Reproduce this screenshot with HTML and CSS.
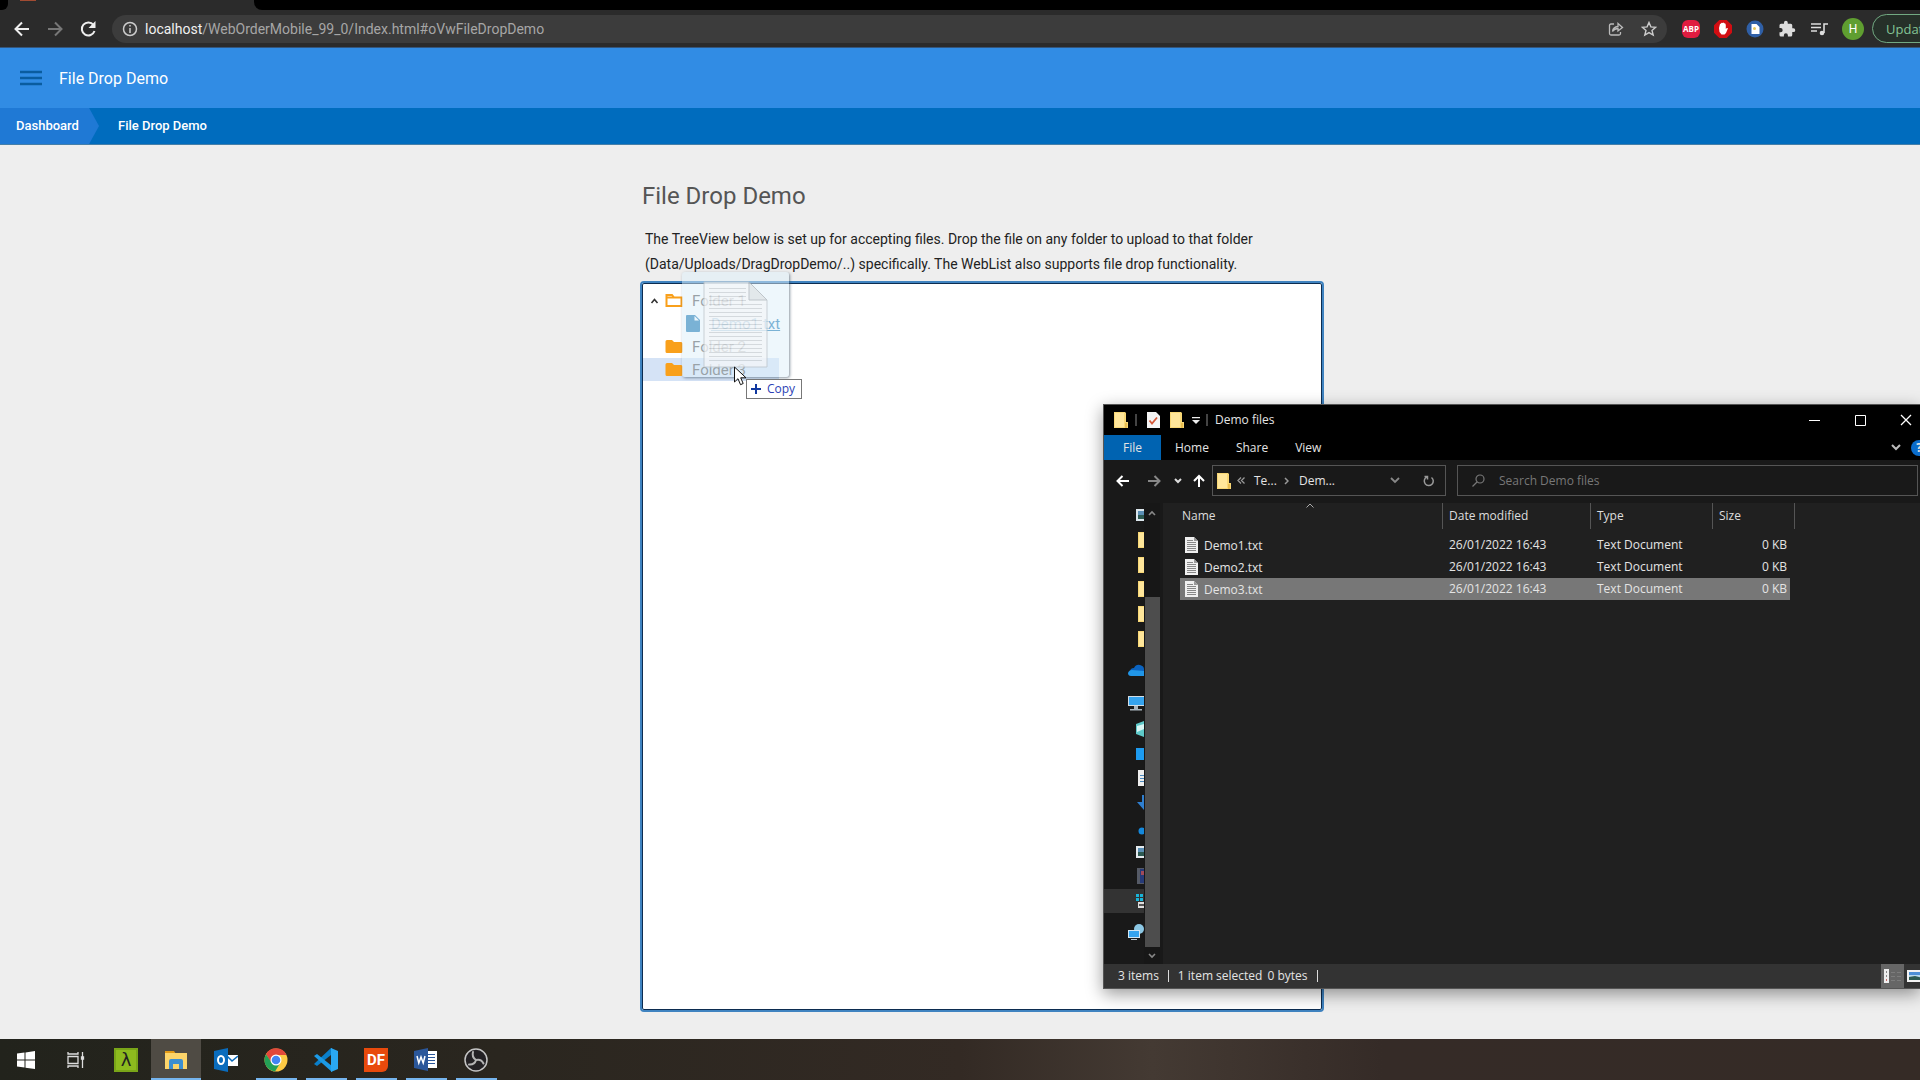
FILE: index.html
```html
<!DOCTYPE html>
<html lang="en">
<head>
<meta charset="utf-8">
<title>File Drop Demo</title>
<link rel="stylesheet" href="styles.css">
</head>
<body>
<svg class="defs" aria-hidden="true">
  <symbol id="folder" viewBox="0 0 14 18"><path fill="#f8d775" d="M0 1h11l1 1v9h2v6H0z"/><path fill="#e9bd4f" d="M11 12h2v5h-2z"/><path fill="#ffe69a" d="M1 2h9v14H1z"/></symbol>
  <symbol id="textfile" viewBox="0 0 13 16"><path fill="#f0f0f0" d="M0 0h9l4 4v12H0z"/><path fill="#9a9a9a" d="M9 0l4 4H9z"/><path stroke="#888" d="M2 3.500h6M2 5.500h9M2 7.500h9M2 9.500h9M2 11.500h9M2 13.500h9"/></symbol>
  <symbol id="treefolder" viewBox="0 0 18 15"><path fill="#f9a01b" d="M2 1h5l2 2h7q1.500 0 1.500 1.500v8q0 1.500-1.500 1.500H2Q.5 14 .5 12.500v-10Q.5 1 2 1z"/></symbol>
</svg>

<header class="browser">
  <div class="tabs"><div class="tab"><span class="favicon"></span></div><div class="tabs-rest"></div></div>
  <div class="toolbar">
    <button class="tool" aria-label="Back"><svg width="18" height="18" viewBox="0 0 18 18" fill="none" stroke="#eee" stroke-width="2"><path d="M16 9H3M9 2.500L2.500 9 9 15.500"/></svg></button>
    <button class="tool" aria-label="Forward"><svg width="18" height="18" viewBox="0 0 18 18" fill="none" stroke="#777" stroke-width="2"><path d="M2 9h13M9 2.500L15.500 9 9 15.500"/></svg></button>
    <button class="tool" aria-label="Reload"><svg width="18" height="18" viewBox="0 0 18 18" fill="none" stroke="#eee" stroke-width="2"><path d="M14.500 5A6.500 6.500 0 1 0 15.500 11"/><path fill="#eee" stroke="none" d="M16.500 1v7H9.500z"/></svg></button>
    <div class="address">
      <svg width="16" height="16" viewBox="0 0 16 16" fill="none" stroke="#ccc" stroke-width="1.500"><circle cx="8" cy="8" r="6.500"/><path d="M8 7v5M8 4v1.600"/></svg>
      <span class="url"><b>localhost</b>/WebOrderMobile_99_0/Index.html#oVwFileDropDemo</span>
      <button class="tool" aria-label="Share"><svg width="16" height="16" viewBox="0 0 16 16" fill="none" stroke="#bbb" stroke-width="1.300"><path d="M6 3H3Q1.500 3 1.500 4.500v8Q1.500 14 3 14h8q1.500 0 1.500-1.500V11M4.500 10.500Q5 6 10 5.500V2.500L14.500 6.500 10 10V7.500Q6.500 7.500 4.500 10.500z"/></svg></button>
      <button class="tool" aria-label="Bookmark"><svg width="16" height="16" viewBox="0 0 16 16" fill="none" stroke="#ccc" stroke-width="1.400"><path d="M8 1.500l1.900 4.400 4.800.4-3.700 3.100 1.200 4.700L8 11.600l-4.200 2.500L5 9.400 1.300 6.300l4.800-.4z"/></svg></button>
    </div>
    <div class="extensions">
      <button class="tool" aria-label="Adblock Plus"><span class="abp">ABP</span></button>
      <button class="tool" aria-label="AdBlock"><svg width="18" height="18" viewBox="0 0 18 18"><path fill="#d20d12" d="M5.300 0h7.400L18 5.300v7.400L12.700 18H5.300L0 12.700V5.300z"/><path fill="#fff" d="M5 8l1-4 1-.5.5-.8 1 .3.8-.5 1 .8 1 .2.5 1.500V9l1-1 1.200.3-2 4.700-1.500 1.500H7.500L5.500 12z"/></svg></button>
      <button class="tool" aria-label="Document"><svg width="18" height="18" viewBox="0 0 18 18"><circle cx="9" cy="9" r="8.500" fill="#2f5fa6"/><path fill="#fff" d="M5.500 4h5l3 3v7h-8z"/><circle cx="8.500" cy="8.500" r="1.500" fill="#e8c85a"/></svg></button>
      <button class="tool" aria-label="Extensions"><svg width="18" height="18" viewBox="0 0 24 24" fill="#ddd"><path d="M20.500 11H19V7a2 2 0 0 0-2-2h-4V3.500a2.500 2.500 0 0 0-5 0V5H4a2 2 0 0 0-2 2v3.800h1.500a2.700 2.700 0 0 1 0 5.400H2V20a2 2 0 0 0 2 2h3.800v-1.500a2.700 2.700 0 0 1 5.400 0V22H17a2 2 0 0 0 2-2v-4h1.500a2.500 2.500 0 0 0 0-5z"/></svg></button>
      <button class="tool" aria-label="Media"><svg width="18" height="18" viewBox="0 0 18 18" fill="none" stroke="#ddd" stroke-width="1.600"><path d="M1 4h10M1 7.500h10M1 11h6M14 13V4h4"/><circle cx="12" cy="13" r="2.300" fill="#ddd" stroke="none"/></svg></button>
      <button class="avatar" aria-label="Profile">H</button>
      <button class="update">Update</button>
    </div>
  </div>
</header>

<main class="page">
  <div class="app-bar">
    <button class="tool" aria-label="Menu"><svg width="22" height="18" viewBox="0 0 22 18" stroke="#0a5c9f" stroke-width="2.600"><path d="M0 3h22M0 9h22M0 15h22"/></svg></button>
    <span>File Drop Demo</span>
  </div>
  <nav class="crumbs"><a class="crumb-home" href="#dashboard">Dashboard</a><a class="crumb" href="#demo">File Drop Demo</a></nav>
  <section class="content">
    <h1>File Drop Demo</h1>
    <p>The TreeView below is set up for accepting files. Drop the file on any folder to upload to that folder (Data/Uploads/DragDropDemo/..) specifically. The WebList also supports file drop functionality.</p>
    <ul class="tree">
      <li><svg class="caret" viewBox="0 0 8 6" fill="none" stroke="#333" stroke-width="1.600"><path d="M1 5l3-3.500L7 5"/></svg><svg class="ico" viewBox="0 0 18 15" fill="none" stroke="#f9a01b" stroke-width="2"><path d="M1.500 4.500h15V13h-15V2H7l2 2.500"/></svg>Folder 1</li>
      <li class="child"><svg class="doc" viewBox="0 0 14 17"><path fill="#1674b1" d="M1 0h8l5 5v11q0 1-1 1H1q-1 0-1-1V1q0-1 1-1z"/><path fill="#fff" d="M8.500 1v4.500H13z"/></svg><a href="#demo1">Demo1.txt</a></li>
      <li><span class="caret"></span><svg class="ico"><use href="#treefolder"/></svg>Folder 2</li>
      <li class="target"><span class="caret"></span><svg class="ico"><use href="#treefolder"/></svg>Folder 3</li>
    </ul>
  </section>
  <div class="drag">
    <div class="ghost"><svg width="66" height="88" viewBox="0 0 66 88"><path fill="#f4f6f8" stroke="#bcc3c8" d="M1 1h45l18 18v67H1z"/><path fill="#dfe3e6" stroke="#aeb5ba" d="M46 1v18h18z"/><path stroke="#ccd0d3" d="M6 7.500h37M6 11.500h37M6 15.500h37M6 19.500h37M6 23.500h53M6 27.500h53M6 31.500h53M6 35.500h53M6 39.500h53M6 43.500h53M6 47.500h53M6 51.500h53M6 55.500h53M6 59.500h53M6 63.500h53M6 67.500h53M6 71.500h53M6 75.500h53M6 79.500h53"/></svg></div>
    <svg class="cursor" viewBox="0 0 13 20"><path fill="#fff" stroke="#111" d="M.5 1v15l3.500-3.300 2.500 6 2.700-1.200-2.500-5.700H12z"/></svg>
    <div class="tip"><svg width="10" height="10" viewBox="0 0 10 10" stroke="#1038a0" stroke-width="2"><path d="M0 5h10M5 0v10"/></svg>Copy</div>
  </div>
</main>

<section class="window">
  <div class="titlebar">
    <svg width="14" height="18"><use href="#folder"/></svg><i class="sep"></i>
    <svg class="check" width="13" height="16" viewBox="0 0 13 16"><path fill="#f4f4f4" d="M0 0h9l4 4v12H0z"/><path fill="none" stroke="#d4593a" stroke-width="1.800" d="M2.500 8.500L5 11.500l5-6"/></svg>
    <svg width="14" height="18"><use href="#folder"/></svg>
    <svg class="drop" width="8" height="7" viewBox="0 0 8 7" fill="#eee"><path d="M0 0h8v1.300H0zM0 3h8L4 7z"/></svg><i class="sep"></i>
    <span class="wtitle">Demo files</span>
    <button class="tool" aria-label="Minimize"><svg width="12" height="12" stroke="#fff"><path d="M1 6.500h11"/></svg></button>
    <button class="tool" aria-label="Maximize"><svg width="12" height="12" fill="none" stroke="#fff"><path d="M1.500 1.500h10v10h-10z"/></svg></button>
    <button class="tool" aria-label="Close"><svg width="12" height="12" fill="none" stroke="#fff" stroke-width="1.300"><path d="M1 1l10 10M11 1L1 11"/></svg></button>
  </div>
  <div class="ribbon">
    <button class="file">File</button><button>Home</button><button>Share</button><button>View</button>
    <svg class="expand" width="10" height="7" viewBox="0 0 10 7" fill="none" stroke="#bbb" stroke-width="2"><path d="M1 1l4 4 4-4"/></svg><span class="help">?</span>
  </div>
  <div class="location">
    <button class="tool" aria-label="Back"><svg width="14" height="12" viewBox="0 0 14 12" fill="none" stroke="#fff" stroke-width="2"><path d="M13 6H2M6.500 1L1.500 6l5 5"/></svg></button>
    <button class="tool" aria-label="Forward"><svg width="14" height="12" viewBox="0 0 14 12" fill="none" stroke="#888" stroke-width="2"><path d="M1 6h11M7.500 1l5 5-5 5"/></svg></button>
    <button class="tool recent" aria-label="Recent"><svg width="8" height="6" viewBox="0 0 8 6" fill="none" stroke="#ddd" stroke-width="2"><path d="M1 1l3 3 3-3"/></svg></button>
    <button class="tool" aria-label="Up"><svg width="12" height="14" viewBox="0 0 12 14" fill="none" stroke="#fff" stroke-width="2"><path d="M6 13V2M1 7l5-5 5 5"/></svg></button>
    <div class="path">
      <svg width="14" height="18"><use href="#folder"/></svg>
      <svg class="p1" width="8" height="7" viewBox="0 0 8 7" fill="none" stroke="#999" stroke-width="1.300"><path d="M4 .5l-3 3 3 3M7.500 .5l-3 3 3 3"/></svg><span class="p2">Te...</span>
      <svg class="p3" width="5" height="8" viewBox="0 0 5 8" fill="none" stroke="#999" stroke-width="1.500"><path d="M1 1l3 3-3 3"/></svg><span class="p4">Dem...</span>
      <svg class="p5" width="10" height="7" viewBox="0 0 10 7" fill="none" stroke="#888" stroke-width="1.800"><path d="M1 1l4 4 4-4"/></svg>
      <svg width="12" height="12" viewBox="0 0 12 12" fill="none" stroke="#999" stroke-width="1.500"><path d="M8.500 2.500A4.500 4.500 0 1 1 3.500 2.200M1.500 1.500h3v3"/></svg>
    </div>
    <label class="search"><svg width="13" height="13" viewBox="0 0 13 13" fill="none" stroke="#777" stroke-width="1.200"><circle cx="8" cy="5" r="4"/><path d="M5 8l-4.500 4.500"/></svg><input type="search" placeholder="Search Demo files" aria-label="Search Demo files"></label>
  </div>
  <div class="body">
    <div class="nav">
      <div class="group quick">
        <span><svg viewBox="0 0 16 16"><path fill="#dce6ec" d="M0 2h16v12H0z"/><path fill="#5b8fb5" d="M2 4h12v4H2z"/><path fill="#2d5a52" d="M2 8h12v4H2z"/></svg></span>
        <span class="fold"><svg><use href="#folder"/></svg></span><span class="fold"><svg><use href="#folder"/></svg></span><span class="fold"><svg><use href="#folder"/></svg></span><span class="fold"><svg><use href="#folder"/></svg></span><span class="fold"><svg><use href="#folder"/></svg></span>
      </div>
      <div class="group single"><span class="root"><svg viewBox="0 0 16 16"><path fill="#0a63c0" d="M2 10q0-4 4-4 2-4 6-3t4 4v6H3z"/><path fill="#2196e8" d="M0 11q1-3 4-3l12 1v5H3q-3 0-3-3z"/></svg></span></div>
      <div class="group single"><span class="root"><svg viewBox="0 0 16 16"><path fill="#d2dde5" d="M0 1h16v10H0z"/><path fill="#35a3ee" d="M1 2h15v8H1z"/><path fill="#aab5bd" d="M6 11h4v3h4v1.500H2V14h4z"/></svg></span></div>
      <div class="group pc">
        <span><svg viewBox="0 0 16 16"><path fill="#5ec9c9" d="M0 3l8-3v16l-8-3z"/><path fill="#d9f6f4" d="M1 5l7-2v5L1 11z"/></svg></span>
        <span><svg viewBox="0 0 16 16"><path fill="#1d9bf0" d="M0 2h16v12H0z"/></svg></span>
        <span><svg viewBox="0 0 16 16"><path fill="#eee" d="M2 0h12v16H2z"/><path stroke="#4c8ac0" d="M4 5.500h8M4 8.500h8M4 11.500h8"/></svg></span>
        <span><svg viewBox="0 0 16 16"><path fill="#2f7fd0" d="M6 0h4v7h5l-7 8-7-8h5z"/></svg></span>
        <span><svg viewBox="0 0 16 16"><circle cx="6" cy="12" r="3.500" fill="#1488dc"/></svg></span>
        <span><svg viewBox="0 0 16 16"><path fill="#e4eaee" d="M0 2h16v12H0z"/><path fill="#5b8fb5" d="M2 4h12v4H2z"/><path fill="#2d5a52" d="M2 8h12v4H2z"/></svg></span>
        <span><svg viewBox="0 0 16 16"><path fill="#555a66" d="M1 0h14v16H1z"/><path fill="#263a78" d="M4 1h8v14H4z"/><path fill="#a04a5a" d="M5 3h4v4H5z"/></svg></span>
        <span class="active"><svg viewBox="0 0 16 16"><path fill="#19b4d8" d="M0 1h3v3H0zM4 1h3v3H4zM0 5h3v3H0zM4 5h3v3H4z"/><path fill="#ddd" d="M2 9h14v6H2z"/><path fill="#555" d="M3 11h9v2H3z"/></svg></span>
      </div>
      <div class="group net"><span class="root"><svg viewBox="0 0 16 16"><circle cx="11" cy="5" r="5" fill="#8cc7e4"/><path fill="#d2e6f3" d="M0 6h12v8H0z"/><path fill="#35a3ee" d="M1 7h10v6H1z"/><path fill="#bcc6cc" d="M3 15h6v1H3z"/></svg></span></div>
    </div>
    <div class="scroll"><svg width="8" height="6" viewBox="0 0 8 6" fill="none" stroke="#888" stroke-width="1.600"><path d="M1 5l3-3 3 3"/></svg><i></i><svg width="8" height="6" viewBox="0 0 8 6" fill="none" stroke="#888" stroke-width="1.600"><path d="M1 1l3 3 3-3"/></svg></div>
    <div class="files">
      <table>
        <thead><tr><th class="c-name">Name<svg class="sort" viewBox="0 0 8 5" fill="none" stroke="#aaa"><path d="M.5 4.500L4 1l3.500 3.500"/></svg></th><th class="c-date">Date modified</th><th class="c-type">Type</th><th class="c-size">Size</th></tr></thead>
        <tbody>
          <tr><td><svg><use href="#textfile"/></svg>Demo1.txt</td><td>26/01/2022 16:43</td><td>Text Document</td><td>0 KB</td></tr>
          <tr><td><svg><use href="#textfile"/></svg>Demo2.txt</td><td>26/01/2022 16:43</td><td>Text Document</td><td>0 KB</td></tr>
          <tr class="selected"><td><svg><use href="#textfile"/></svg>Demo3.txt</td><td>26/01/2022 16:43</td><td>Text Document</td><td>0 KB</td></tr>
        </tbody>
      </table>
    </div>
  </div>
  <div class="status"><span>3 items</span><i></i><span>1 item selected</span><span class="bytes">0 bytes</span><i></i>
    <button class="view on" aria-label="Details view"><svg width="18" height="14" viewBox="0 0 18 14"><path fill="#eee" d="M0 0h5v14H0z"/><path stroke="#7c7c7c" d="M7 3.500h4M13 3.500h4M7 7.500h4M13 7.500h4M7 11.500h4M13 11.500h4"/><path fill="#c66" d="M2 10h1v2H2z"/><path fill="#888" d="M2 2h1v2H2zM2 6h1v2H2z"/></svg></button>
    <button class="view" aria-label="Thumbnail view"><svg width="16" height="12" viewBox="0 0 16 12"><path fill="#f2f2f2" d="M0 0h16v12H0z"/><path fill="#4d8fd6" d="M2 2h14v4H2z"/><path fill="#b9d9ee" d="M2 5h14v2H2z"/><path fill="#2d5a52" d="M2 7l6-1 8 2v2H2z"/></svg></button>
  </div>
</section>

<footer class="taskbar">
  <button aria-label="Start"><svg width="18" height="18" viewBox="0 0 18 18" fill="#fff"><path d="M0 2.500l7.500-1V8.500H0zM8.500 1.400L18 0v8.500H8.500zM0 9.500h7.500v7L0 15.500zM8.500 9.500H18V18l-9.500-1.300z"/></svg></button>
  <button aria-label="Task view"><svg width="18" height="18" viewBox="0 0 18 18" fill="none" stroke="#ddd" stroke-width="1.300"><path d="M1 1v2h10V1M1 17v-2h10v2M1 5.500h10v7H1zM15.500 1v16"/><path fill="#ddd" d="M14.500 6h2v2h-2z"/></svg></button>
  <button aria-label="Lambda"><span class="lambda">λ</span></button>
  <button class="open current" aria-label="File Explorer"><svg width="24" height="20" viewBox="0 0 24 20"><path fill="#e39a16" d="M1 1h9l2 3H1z"/><path fill="#fcd46a" d="M1 3h22v16H1z"/><path fill="#3c8ed0" d="M5 11q0-2 2-2h10q2 0 2 2v8h-4v-5H9v5H5z"/></svg></button>
  <button aria-label="Outlook"><svg width="24" height="24" viewBox="0 0 24 24"><path fill="#fff" d="M12 7h12v11H12z"/><path fill="none" stroke="#0a6cbd" stroke-width="1.500" d="M13 8l5 5 6-5"/><path fill="#0a6cbd" d="M0 3l14-3v24L0 21z"/><ellipse cx="7" cy="12" rx="3" ry="4" fill="none" stroke="#fff" stroke-width="2"/></svg></button>
  <button class="open" aria-label="Chrome"><svg width="24" height="24" viewBox="0 0 24 24"><circle cx="12" cy="12" r="11.500" fill="#fdca44"/><path fill="#e2483b" d="M2 6.300A11.500 11.500 0 0 1 22.500 7H12L7 14.500z"/><path fill="#23a056" d="M2 6.300A11.500 11.500 0 0 0 11 23.500l5.500-9L7.500 14.500z"/><circle cx="12" cy="12" r="5.500" fill="#fff"/><circle cx="12" cy="12" r="4.300" fill="#4285f4"/></svg></button>
  <button class="open" aria-label="Visual Studio Code"><svg width="24" height="24" viewBox="0 0 24 24"><path fill="#0a7fca" d="M18 0l-1 7L3 18l-3-2 17-16z"/><path fill="#1c9ae6" d="M0 8l3-2 15 12v6L0 8z"/><path fill="#2aa8f2" d="M17 0l7 3v18l-7 3z"/></svg></button>
  <button class="open" aria-label="DataFlex"><span class="df">DF</span></button>
  <button class="open" aria-label="Word"><svg width="24" height="24" viewBox="0 0 24 24"><path fill="#fff" d="M12 3h11v17H12z"/><path stroke="#2b579a" d="M14 6.500h7M14 9.500h7M14 12.500h7M14 15.500h7"/><path fill="#2b579a" d="M0 3l14-3v23L0 20z"/><path fill="none" stroke="#fff" stroke-width="1.500" d="M3 8l1.800 7L7 9l2.200 6L11 8"/></svg></button>
  <button class="open" aria-label="OBS"><svg width="24" height="24" viewBox="0 0 24 24" fill="none"><circle cx="12" cy="12" r="11" fill="#232124" stroke="#c4c4c4" stroke-width="1.500"/><path stroke="#b4b4b4" stroke-width="2" stroke-linecap="round" d="M9 4q-1.500 5 3 8M12 12q5-1.500 7.500 3.500M12 12q-1.500 5-7 4.500"/></svg></button>
</footer>
</body>
</html>
```
FILE: styles.css
```css
* { box-sizing: border-box; }
body { margin: 0; height: 100vh; overflow: hidden; display: flex; flex-direction: column; background: #eee; font-family: Roboto, sans-serif; position: relative; }
button { border: 0; padding: 0; background: none; font: inherit; color: inherit; }
svg { flex: none; display: block; }
a { color: inherit; text-decoration: none; }
.defs { position: absolute; width: 0; height: 0; }
.tool { display: flex; align-items: center; justify-content: center; flex: none; }

/* Browser chrome */
.browser { flex: none; background: #000; }
.tabs { display: flex; height: 10px; background: #2b2b2b; }
.tabs::before { content: ""; width: 8px; background: #000; border-bottom-right-radius: 6px; }
.tab { width: 246px; background: #2b2b2b; }
.favicon { display: block; width: 16px; height: 1px; margin-left: 12px; background: #a14b32; }
.tabs-rest { flex: 1; background: #000; border-bottom-left-radius: 8px; }
.toolbar { display: flex; align-items: center; gap: 15px; height: 38px; padding-left: 13px; background: #2b2b2b; border-bottom: 1px solid #34567d; }
.address { flex: 1; display: flex; align-items: center; gap: 17px; height: 28px; padding: 0 10px; border-radius: 14px; background: #3c3c3c; }
.url { flex: 1; margin-left: -10px; font: 14px/18px Roboto, sans-serif; color: #a6a6a6; }
.url b { color: #f0f0f0; font-weight: 400; }
.extensions { display: flex; align-items: center; gap: 14px; width: 238px; overflow: hidden; }
.abp { width: 18px; height: 18px; border-radius: 6px; background: #e01c40; color: #fff; font: 700 8px/18px "Open Sans", sans-serif; text-align: center; }
.avatar { flex: none; width: 22px; height: 22px; border-radius: 11px; background: #5f9e30; color: #fff; font-size: 12px; }
.update { flex: none; width: 80px; height: 29px; margin-left: -6px; padding-left: 13px; border: 1px solid #72a982; border-radius: 15px; background: #263029; color: #84c495; font: 13px/18px "Open Sans", sans-serif; text-align: left; }

/* Web application */
.page { flex: 1; display: flex; flex-direction: column; min-height: 0; }
.app-bar { display: flex; align-items: center; gap: 17px; height: 60px; flex: none; padding-left: 20px; background: #318ce4; color: #fff; font-size: 16px; }
.crumbs { display: flex; height: 37px; flex: none; background: #006cbe; border-bottom: 1px solid #457fa9; color: #fff; font-size: 13px; font-weight: 500; line-height: 36px; }
.crumb-home { width: 99px; padding-left: 16px; background: #1f79d5; clip-path: polygon(0 0, 90% 0, 100% 50%, 90% 100%, 0 100%); }
.crumb { margin-left: 19px; }
.content { flex: 1; display: flex; flex-direction: column; width: 100%; max-width: 680px; margin: 0 auto; padding: 35px 0 29px; position: relative; left: 22px; }
.content h1 { margin: 0; font-size: 24px; line-height: 32px; font-weight: 400; color: #555; }
.content p { margin: 15px 0 6px 3px; font-size: 14px; line-height: 25px; color: #222; }
.tree { flex: 1; margin: 0; padding: 5px 0; list-style: none; background: #fff; border: 1px solid #0c2c50; outline: 2px solid #3f83c0; border-radius: 2px; font-size: 15px; color: #555; }
.tree li { display: flex; align-items: center; width: 136px; height: 23px; padding-left: 7px; }
.tree .caret { width: 9px; height: 6px; margin-right: 6px; }
.tree .ico { width: 18px; height: 15px; margin-right: 9px; }
.tree .child { padding-left: 43px; color: #1674b1; }
.tree .child a { text-decoration: underline; }
.tree .doc { width: 14px; height: 17px; margin-right: 11px; }
.tree .target { background: #d5e3f6; }

/* Dragged file that follows the pointer */
.drag { position: absolute; left: 682px; top: 272px; }
.ghost { display: flex; justify-content: center; width: 107px; height: 105px; padding: 9px 0 0 0; background: rgba(222, 240, 250, .5); border-radius: 3px; box-shadow: 1px 1px 3px rgba(60, 80, 100, .6); }
.ghost svg { opacity: .75; }
.cursor { position: absolute; left: 52px; top: 94px; width: 13px; height: 20px; }
.tip { position: absolute; left: 64px; top: 107px; display: flex; align-items: center; gap: 6px; width: 56px; height: 20px; padding-left: 4px; background: #fff; border: 1px solid #777; color: #2c3fb5; font: 12px/18px "Open Sans", sans-serif; }

/* Explorer window */
.window { position: absolute; left: 1103px; right: 0; top: 404px; height: 585px; display: flex; flex-direction: column; overflow: visible; background: #191919; border: 1px solid #555; border-right: 0; box-shadow: 0 5px 16px rgba(0, 0, 0, .4); color: #e4e4e4; font: 12px/16px "Open Sans", sans-serif; }
.titlebar { display: flex; align-items: center; height: 30px; flex: none; padding: 0 8px 0 10px; background: #000; }
.sep { width: 2px; height: 12px; margin: 0 10px 0 7px; background: #444; }
.check { margin-right: 10px; }
.drop { margin-left: 8px; }
.drop + .sep { margin: 0 7px 0 6px; }
.wtitle { flex: 1; }
.titlebar .tool { margin-left: 34px; }
.ribbon { display: flex; align-items: center; height: 25px; flex: none; background: #000; overflow: hidden; }
.ribbon button { height: 25px; margin-left: 27px; }
.ribbon .file { width: 57px; margin: 0 -13px 0 0; background: #0063b1; }
.expand { margin-left: auto; }
.help { width: 16px; height: 16px; margin: 0 -7px 0 10px; border-radius: 8px; background: #0a6ccc; text-align: center; flex: none; font-weight: 700; }
.location { display: flex; align-items: center; height: 43px; flex: none; padding: 0 2px 2px 12px; gap: 17px; }
.recent { margin: 0 -6px 0 -4px; }
.path { display: flex; align-items: center; width: 234px; height: 31px; flex: none; margin-left: -10px; padding-left: 4px; border: 1px solid #555; }
.p1 { margin-left: 6px; }
.p2 { width: 30px; margin-left: 9px; }
.p4 { width: 83px; margin-left: 10px; }
.p5 { margin: 0 23px 0 8px; }
.search { flex: 1; display: flex; align-items: center; gap: 14px; height: 31px; margin-left: -6px; padding-left: 14px; border: 1px solid #555; }
.search input { flex: 1; border: 0; padding: 0; outline: 0; background: none; color: #777; font: inherit; }
.search input::placeholder { color: #777; }
.body { flex: 1; display: flex; min-height: 0; }
.nav { width: 40px; overflow: hidden; }
.group { display: flex; flex-direction: column; }
.group span { flex: 1; display: flex; align-items: center; padding-left: 32px; overflow: hidden; }
.group span.root { padding-left: 24px; }
.group svg { width: 16px; height: 16px; }
.group .fold { padding-left: 34px; }
.group .fold svg { width: 14px; height: 18px; }
.quick { height: 148px; }
.single { height: 33px; padding-top: 4px; }
.pc { height: 196px; }
.group .active { background: #333; }
.net { height: 38px; }
.scroll { display: flex; flex-direction: column; align-items: center; width: 16px; padding: 7px 0 5px; background: #171717; }
.scroll i { flex: 1; width: 15px; margin: 81px 0 6px; background: #4d4d4d; }
.files { flex: 1; margin-left: 3px; padding-left: 17px; background: #202020; }
table { border-spacing: 0; table-layout: fixed; width: 615px; }
th { height: 26px; padding: 0 6px; border-right: 1px solid #555; text-align: left; font-weight: 400; color: #ddd; position: relative; }
.c-name { width: 263px; padding-left: 2px; }
.c-date { width: 148px; }
.c-type { width: 122px; }
.sort { position: absolute; left: 48%; top: 0; width: 8px; height: 5px; }
thead::after { content: ""; display: block; height: 5px; }
td { height: 22px; padding: 0 0 0 6px; white-space: nowrap; }
td:first-child { padding-left: 5px; }
td svg { display: inline-block; width: 13px; height: 16px; margin-right: 6px; vertical-align: -3px; }
td:last-child { text-align: right; padding-right: 3px; border-right: 5px solid transparent; background-clip: padding-box; }
.selected td { background-color: #777; }
.status { display: flex; align-items: center; height: 24px; flex: none; padding-left: 14px; background: #333; overflow: hidden; }
.status i { width: 1px; height: 12px; margin: 0 9px; background: #ddd; }
.bytes { margin-left: 5px; }
.view { flex: none; display: flex; align-items: center; width: 23px; height: 24px; padding-left: 3px; }
.view.on { margin-left: auto; background: #666; }
.view:last-child { width: 16px; }

/* Taskbar */
.taskbar { display: flex; flex: none; height: 41px; padding-left: 1px; background: linear-gradient(90deg, #22231c 0, #2a261f 26%, #332a24 50%, #443a33 60%, #352b27 72%, #352b26 100%); }
.taskbar button { display: flex; align-items: center; justify-content: center; width: 50px; height: 41px; position: relative; }
.taskbar .open::after { content: ""; position: absolute; left: 5px; right: 4px; bottom: 0; height: 2px; background: #76b5ee; }
.taskbar .current { background: #4f4b44; }
.taskbar .current::after { left: 0; right: 0; }
.lambda, .df { width: 24px; height: 24px; background: #8dbb1e; color: #222; font: 18px/20px "DejaVu Sans", sans-serif; }
.lambda { border: 2px solid #79a518; }
.df { border-radius: 0 0 6px 0; background: #e84a0c; color: #fff; font: 700 15px/24px Roboto, sans-serif; }
```
